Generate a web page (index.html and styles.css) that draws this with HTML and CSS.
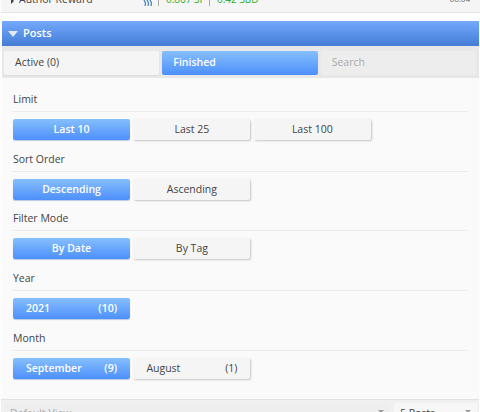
FILE: index.html
```html
<!DOCTYPE html>
<html lang="en">
<head>
    <meta charset="UTF-8">
    <meta name="viewport" content="width=device-width, initial-scale=1.0">
    <title>Posts</title>
    <link rel="stylesheet" href="styles.css">
</head>
<body>
    <div class="reward-row">
        <span class="reward-name"><span class="reward-arrow"></span>Author Reward</span>
        <svg class="steem-icon" width="10" height="6" viewBox="0 0 10 6">
            <path d="M1 0 L2.5 3 L2 6 M4 0 L5.5 3 L5 6 M7 0 L8.5 3 L8 6" fill="none" stroke="#3f7fc4" stroke-width="1.2"/>
        </svg>
        <span class="reward-sep"></span>
        <span class="reward-val">0.867 SP</span>
        <span class="reward-sep"></span>
        <span class="reward-val">0.42 SBD</span>
        <span class="reward-time">06:04</span>
    </div>

    <div class="posts-header">
        <span class="posts-arrow"></span>
        <span>Posts</span>
    </div>

    <div class="tabs">
        <div class="tab">Active (0)</div>
        <div class="tab active">Finished</div>
        <div class="tab search">Search</div>
    </div>

    <div class="panel">
        <div class="group">
            <div class="group-label">Limit</div>
            <div class="btn-row">
                <div class="btn active">Last 10</div>
                <div class="btn">Last 25</div>
                <div class="btn">Last 100</div>
            </div>
        </div>
        <div class="group">
            <div class="group-label">Sort Order</div>
            <div class="btn-row">
                <div class="btn active">Descending</div>
                <div class="btn">Ascending</div>
            </div>
        </div>
        <div class="group">
            <div class="group-label">Filter Mode</div>
            <div class="btn-row">
                <div class="btn active">By Date</div>
                <div class="btn">By Tag</div>
            </div>
        </div>
        <div class="group">
            <div class="group-label">Year</div>
            <div class="btn-row">
                <div class="btn active split"><span>2021</span><span>(10)</span></div>
            </div>
        </div>
        <div class="group">
            <div class="group-label">Month</div>
            <div class="btn-row">
                <div class="btn active split"><span>September</span><span>(9)</span></div>
                <div class="btn split"><span>August</span><span>(1)</span></div>
            </div>
        </div>
    </div>

    <div class="footer-bar">
        <div class="select wide">Default View<span class="caret"></span></div>
        <div class="select narrow">5 Posts<span class="caret"></span></div>
    </div>
</body>
</html>
```

FILE: styles.css
```css
html, body {
    height: 412px;
    overflow: hidden;
}

body {
    margin: 0;
    background: #fdfdfd;
    font-family: "Open Sans", sans-serif;
    font-size: 10.5px;
    color: #444;
}

.reward-row {
    height: 12px;
    display: flex;
    margin-left: 1px;
    background: #f5f5f5;
    border-bottom: 1px solid #e4e4e4;
    overflow: hidden;
    line-height: 12px;
}

.reward-name {
    width: 142px;
    padding-left: 18px;
    box-sizing: border-box;
    position: relative;
    top: -7px;
    flex: none;
}

.reward-arrow {
    position: absolute;
    left: 10px;
    top: 5px;
    border-left: 3px solid #444;
    border-top: 3px solid transparent;
    border-bottom: 3px solid transparent;
}

.steem-icon {
    flex: none;
    margin-right: 5px;
}

.reward-sep {
    width: 1px;
    height: 6px;
    background: #aaa;
    margin-right: 7px;
    flex: none;
}

.reward-val {
    width: 43px;
    flex: none;
    color: #2fae2f;
    font-size: 10px;
    position: relative;
    top: -7px;
}

.reward-time {
    margin-left: auto;
    margin-right: 10px;
    font-size: 8px;
    color: #666;
    position: relative;
    top: -7px;
}

.posts-header {
    margin: 8px 1px 0 2px;
    height: 25px;
    display: flex;
    align-items: center;
    gap: 5px;
    padding: 0 0 2px 6px;
    box-sizing: border-box;
    background: linear-gradient(#74a9fb, #447cd6);
    color: #fff;
    font-size: 11px;
    font-weight: 600;
    border-radius: 1px 0 0 0;
}

.posts-arrow {
    border-top: 6px solid #e4e9f2;
    border-left: 5px solid transparent;
    border-right: 5px solid transparent;
    margin-top: 2px;
}

.tabs {
    margin: 0 1px 0 2px;
    height: 32px;
    padding: 5px 3px 3px 2px;
    box-sizing: border-box;
    display: flex;
    gap: 3px;
    background: #e8e8e8;
}

.tab {
    flex: 1;
    height: 24px;
    line-height: 22px;
    padding-left: 11px;
    background: #f5f5f5;
    border-radius: 2px;
    box-shadow: 0 1px 1px #dcdcdc;
}

.tab.active {
    background: linear-gradient(#86bffd, #4d8ffb);
    color: #fff;
    font-weight: 600;
    box-shadow: none;
}

.tab.search {
    background: #ededed;
    color: #aaa;
    box-shadow: none;
}

.panel {
    margin: 0 1px 0 2px;
    height: 321px;
    padding: 14px 11px 0 11px;
    box-sizing: border-box;
    background: #fafafa;
}

.group {
    height: 59.7px;
}

.group-label {
    height: 19px;
    line-height: 14px;
    border-bottom: 1px solid #ececec;
}

.btn-row {
    display: flex;
    gap: 3.4px;
    margin-top: 7px;
}

.btn {
    width: 117px;
    height: 21px;
    line-height: 20.6px;
    text-align: center;
    background: #f5f5f5;
    border-radius: 2px;
    box-shadow: 1px 1px 2px #c4c4c4;
}

.btn.active {
    background: linear-gradient(#86bffd, #4d8ffb);
    color: #fff;
    font-weight: 600;
    box-shadow: 0 1px 1px #b9c9e0;
}

.btn.split {
    display: flex;
    justify-content: space-between;
    padding: 0 13px;
    box-sizing: border-box;
}

.footer-bar {
    margin: 0 1px 0 1px;
    height: 13px;
    padding: 3px 2px 0 3px;
    display: flex;
    gap: 4px;
    background: #f0f0f0;
    border-top: 1px solid #e2e2e2;
    box-sizing: border-box;
    overflow: hidden;
}

.select {
    position: relative;
    height: 22px;
    line-height: 20px;
    padding-left: 6px;
    border-radius: 2px;
    box-sizing: border-box;
}

.select.wide {
    width: 386px;
    background: #eeeeee;
    color: #aaa;
}

.select.narrow {
    width: 83px;
    background: #f7f7f7;
    color: #444;
}

.caret {
    position: absolute;
    right: 6px;
    top: 7px;
    border-top: 3px solid #999;
    border-left: 3px solid transparent;
    border-right: 3px solid transparent;
}
```
